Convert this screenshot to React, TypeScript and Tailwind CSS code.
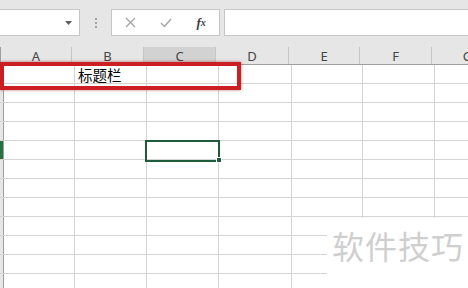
import React from "react";

const cols = [
  { l: "A", w: 71 },
  { l: "B", w: 72 },
  { l: "C", w: 72 },
  { l: "D", w: 73 },
  { l: "E", w: 71 },
  { l: "F", w: 72 },
  { l: "G", w: 72 },
];

export default function App() {
  const rows = Array.from({ length: 12 }, (_, i) => i);
  return (
    <div
      className="relative w-[468px] h-[288px] overflow-hidden bg-white"
      style={{ fontFamily: '"Noto Sans", "Noto Sans CJK SC", sans-serif' }}
    >
      {/* toolbar */}
      <div className="h-[47px] bg-[#e6e6e6] flex items-start pt-[9px]">
        <div className="relative -ml-px w-[81px] h-[27px] bg-white border border-[#c6c6c6] flex items-center justify-end pr-[7px]">
          <svg width="7" height="4" viewBox="0 0 7 4">
            <path d="M0 0 L7 0 L3.5 4 Z" fill="#5f5f5f" />
          </svg>
        </div>
        <div className="w-[31px] h-[27px] flex flex-col items-center justify-center gap-[2px]">
          <div className="w-[2px] h-[2px] bg-[#a0a0a0]" />
          <div className="w-[2px] h-[2px] bg-[#a0a0a0]" />
          <div className="w-[2px] h-[2px] bg-[#a0a0a0]" />
        </div>
        <div className="w-[109px] h-[27px] bg-white border border-[#c6c6c6] flex items-center">
          <div className="w-[36px] flex justify-center pl-[2px]">
            <svg width="11" height="11" viewBox="0 0 11 11">
              <path d="M1 1 L10 10 M10 1 L1 10" stroke="#a6a6a6" strokeWidth="1.4" />
            </svg>
          </div>
          <div className="w-[36px] flex justify-center">
            <svg width="12" height="10" viewBox="0 0 12 10">
              <path d="M1 5 L4.5 8.5 L11 1" stroke="#a6a6a6" strokeWidth="1.5" fill="none" />
            </svg>
          </div>
          <div
            className="w-[36px] flex justify-center text-[13px] italic text-[#3c3c3c] font-semibold"
            style={{ fontFamily: '"Liberation Serif", serif' }}
          >
            f<span className="text-[10px] relative top-[2px]">x</span>
          </div>
        </div>
        <div className="ml-[4px] flex-1 h-[27px] bg-white border border-[#c6c6c6] border-r-0" />
      </div>

      {/* column header */}
      <div className="flex h-[18px] bg-[#e6e6e6] border-b border-[#9f9f9f]">
        <div className="w-[4px] border-r border-[#9f9f9f] bg-[#e6e6e6]" />
        {cols.map((c) => (
          <div
            key={c.l}
            style={{ width: c.w }}
            className={`shrink-0 border-r border-[#c6c6c6] flex items-end justify-center pb-[1px] text-[13px] leading-none text-[#444] ${
              c.l === "C" ? "bg-[#d2d2d2]" : ""
            }`}
          >
            {c.l}
          </div>
        ))}
      </div>

      {/* rows */}
      {rows.map((r) => (
        <div key={r} className="flex h-[19px] border-b border-[#d4d4d4]">
          <div
            className={`w-[4px] shrink-0 border-r border-[#9f9f9f] ${
              r === 4 ? "bg-[#217346]" : "bg-[#e6e6e6]"
            }`}
          />
          {cols.map((c) => (
            <div
              key={c.l}
              style={{ width: c.w }}
              className="shrink-0 border-r border-[#d4d4d4] flex items-center text-[14.5px] leading-none text-black"
            >
              {r === 0 && c.l === "B" ? (
                <span
                  className="pl-[3px] relative top-[1px]"
                  style={{ fontFamily: '"Noto Sans CJK SC", sans-serif' }}
                >
                  标题栏
                </span>
              ) : null}
            </div>
          ))}
        </div>
      ))}

      {/* red highlight box */}
      <div className="absolute left-0 top-[62px] w-[241px] h-[28px] border-4 border-[#cc1f24] shadow-[0_0_3px_rgba(120,0,0,0.5)]" />

      {/* selected cell */}
      <div className="absolute left-[145px] top-[140px] w-[75px] h-[22px] border-2 border-[#1e5b3b]" />
      <div className="absolute left-[216px] top-[157px] w-[6px] h-[6px] bg-[#1e5b3b] border border-white" />

      {/* watermark */}
      <div className="absolute left-[327px] top-[218px] right-0 bottom-0 bg-white flex items-start pt-[11px] pl-[5px]">
        <span
          className="text-[32px] leading-none text-[#cfcfcf] tracking-[1px]"
          style={{ fontFamily: '"Noto Sans CJK SC", sans-serif' }}
        >
          软件技巧
        </span>
      </div>
    </div>
  );
}
